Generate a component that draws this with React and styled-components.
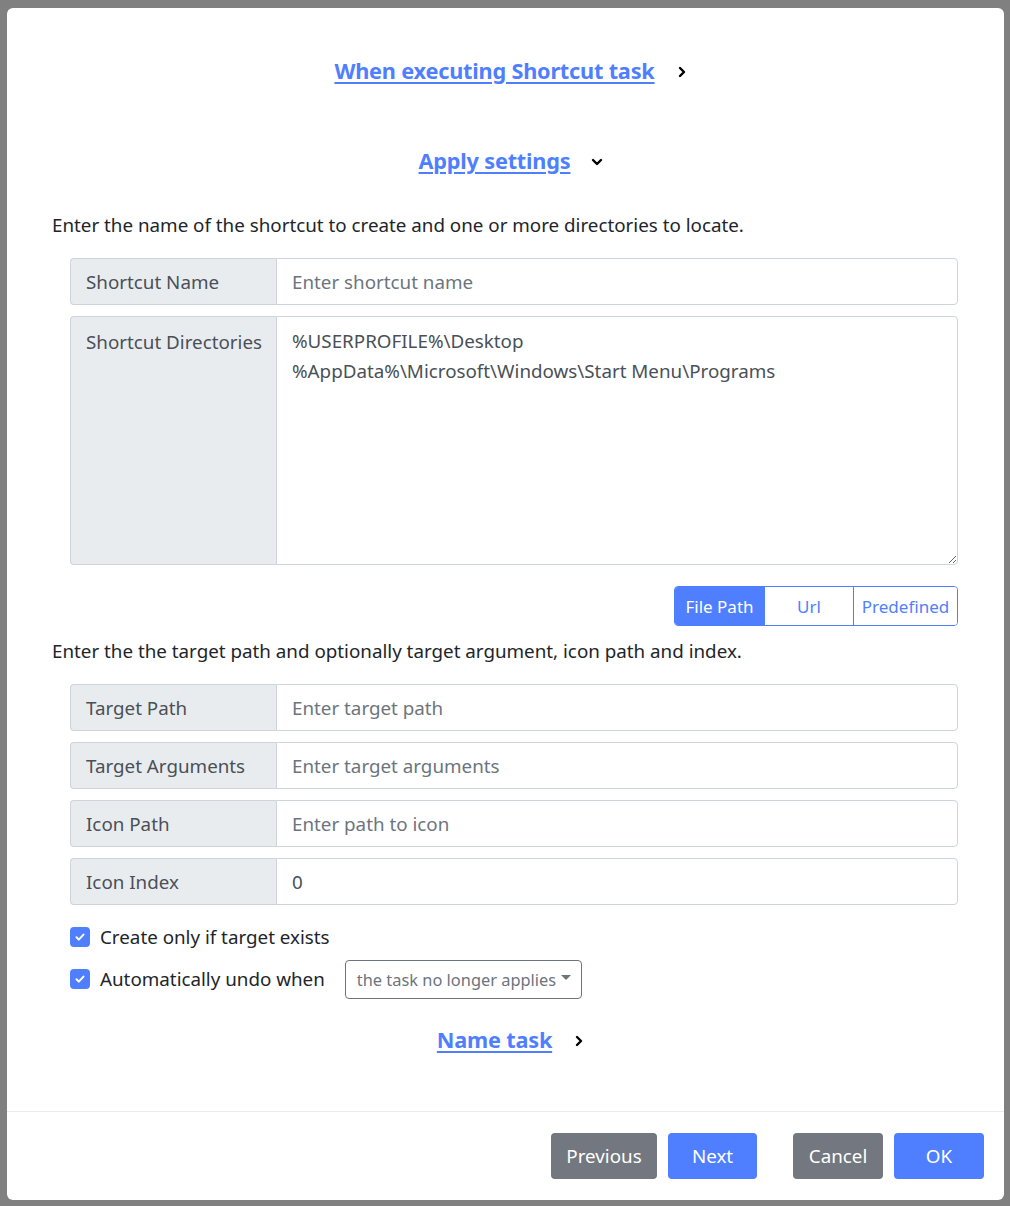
import React from 'react';
import styled, { createGlobalStyle } from 'styled-components';

const GlobalStyle = createGlobalStyle`
  html, body {
    margin: 0;
    padding: 0;
    background: #808080;
  }
  body {
    font-family: 'Noto Sans', 'Open Sans', sans-serif;
    color: #212529;
  }
  * { box-sizing: border-box; }
`;

const Dialog = styled.div`
  margin: 8px 6px 6px 7px;
  width: 997px;
  height: 1192px;
  background: #fff;
  border-radius: 6px;
  display: flex;
  flex-direction: column;
`;

const Body = styled.div`
  flex: 1;
  padding: 44px 46px 0 45px;
`;

const SectionHeader = styled.div`
  display: flex;
  justify-content: center;
  align-items: center;
  gap: 21px;
  height: 36px;
  padding-left: 12px;
  margin-top: ${(p) => p.mt || '0'};
  margin-bottom: ${(p) => p.mb || '54px'};
`;

const HeaderLink = styled.a`
  font-size: 21.7px;
  font-weight: 700;
  color: #4f7fff;
  text-decoration: underline;
  text-underline-offset: 3px;
  text-decoration-thickness: 2px;
  cursor: pointer;
  letter-spacing: -0.2px;
`;

const Chevron = styled.svg`
  width: 12px;
  height: 12px;
  margin-top: 4px;
`;

const Description = styled.p`
  margin: ${(p) => p.m || '0 0 19px'};
  font-size: 18.8px;
  line-height: 27px;
`;

const Groups = styled.div`
  margin-left: 18px;
  display: flex;
  flex-direction: column;
  gap: 11px;
`;

const InputGroup = styled.div`
  display: flex;
  height: ${(p) => p.h || '47px'};
`;

const GroupLabel = styled.div`
  width: 206px;
  flex-shrink: 0;
  background: #e9ecef;
  border: 1px solid #ced4da;
  border-right: none;
  border-radius: 4px 0 0 4px;
  padding: ${(p) => (p.top ? '12px 15px' : '0 15px')};
  display: flex;
  align-items: ${(p) => (p.top ? 'flex-start' : 'center')};
  font-size: 18.8px;
  color: #495057;
  white-space: nowrap;
`;

const TextInput = styled.input`
  flex: 1;
  min-width: 0;
  border: 1px solid #ced4da;
  border-radius: 0 4px 4px 0;
  padding: 0 15px;
  font-family: inherit;
  font-size: 18.8px;
  color: #495057;
  outline: none;
  &::placeholder {
    color: #6c757d;
  }
`;

const TextArea = styled.textarea`
  flex: 1;
  border: 1px solid #ced4da;
  border-radius: 0 4px 4px 0;
  padding: 9px 15px;
  font-family: inherit;
  font-size: 18.8px;
  line-height: 30px;
  color: #495057;
  outline: none;
  resize: vertical;
`;

const ToggleRow = styled.div`
  display: flex;
  justify-content: flex-end;
  margin: 21px 0 12px;
`;

const ToggleGroup = styled.div`
  display: flex;
  border: 1px solid #4f7fff;
  border-radius: 4px;
  overflow: hidden;
  height: 40px;
`;

const ToggleButton = styled.button`
  width: ${(p) => p.w};
  border: none;
  border-left: ${(p) => (p.first ? 'none' : '1px solid #4f7fff')};
  background: ${(p) => (p.active ? '#4f7fff' : '#fff')};
  color: ${(p) => (p.active ? '#fff' : '#4f7fff')};
  font-family: inherit;
  font-size: 17px;
  padding: 0;
  cursor: pointer;
`;

const CheckRow = styled.label`
  display: flex;
  align-items: center;
  gap: 10px;
  font-size: 18.8px;
  margin-left: 18px;
  height: ${(p) => p.h || '30px'};
  margin-top: ${(p) => p.mt || '0'};
`;

const Box = styled.span`
  width: 20px;
  height: 20px;
  border-radius: 4px;
  background: #4f7fff;
  display: inline-flex;
  align-items: center;
  justify-content: center;
  flex-shrink: 0;
`;

const Select = styled.div`
  margin-left: 10px;
  width: 237px;
  height: 39px;
  border: 1px solid #6c757d;
  border-radius: 4px;
  display: flex;
  align-items: center;
  justify-content: space-between;
  padding: 0 10px 0 11px;
  font-size: 16.4px;
  color: #6c757d;
  white-space: nowrap;
`;

const Caret = styled.span`
  width: 0;
  height: 0;
  border-left: 5px solid transparent;
  border-right: 5px solid transparent;
  border-top: 5px solid #6c757d;
  margin-top: -3px;
`;

const Footer = styled.div`
  border-top: 1px solid #e9ecef;
  padding: 21px 20px 21px 0;
  display: flex;
  justify-content: flex-end;
  gap: 11px;
`;

const Button = styled.button`
  height: 46px;
  width: ${(p) => p.w};
  margin-left: ${(p) => p.ml || '0'};
  border: none;
  border-radius: 4px;
  background: ${(p) => (p.secondary ? '#737780' : '#4f7fff')};
  color: #fff;
  font-family: inherit;
  font-size: 18.8px;
  cursor: pointer;
`;

const ChevronRight = () => (
  <Chevron viewBox="0 0 12 12">
    <path d="M4 2l4 4-4 4" fill="none" stroke="#000" strokeWidth="2.4" strokeLinecap="round" strokeLinejoin="round" />
  </Chevron>
);

const ChevronDown = () => (
  <Chevron viewBox="0 0 12 12">
    <path d="M2 4l4 4 4-4" fill="none" stroke="#000" strokeWidth="2.4" strokeLinecap="round" strokeLinejoin="round" />
  </Chevron>
);

const Check = () => (
  <svg width="12" height="12" viewBox="0 0 12 12">
    <path d="M2.5 6.3l2.3 2.3 4.7-5" fill="none" stroke="#fff" strokeWidth="2" strokeLinecap="round" strokeLinejoin="round" />
  </svg>
);

const Field = ({ label, placeholder, value }) => (
  <InputGroup>
    <GroupLabel>{label}</GroupLabel>
    <TextInput placeholder={placeholder} defaultValue={value} />
  </InputGroup>
);

export default function App() {
  return (
    <>
      <GlobalStyle />
      <Dialog>
        <Body>
          <SectionHeader>
            <HeaderLink>When executing Shortcut task</HeaderLink>
            <ChevronRight />
          </SectionHeader>
          <SectionHeader mb="34px">
            <HeaderLink>Apply settings</HeaderLink>
            <ChevronDown />
          </SectionHeader>
          <Description>Enter the name of the shortcut to create and one or more directories to locate.</Description>
          <Groups>
            <Field label="Shortcut Name" placeholder="Enter shortcut name" />
            <InputGroup h="249px">
              <GroupLabel top>Shortcut Directories</GroupLabel>
              <TextArea defaultValue={'%USERPROFILE%\\Desktop\n%AppData%\\Microsoft\\Windows\\Start Menu\\Programs'} />
            </InputGroup>
          </Groups>
          <ToggleRow>
            <ToggleGroup>
              <ToggleButton first active w="89px">File Path</ToggleButton>
              <ToggleButton w="89px">Url</ToggleButton>
              <ToggleButton w="104px">Predefined</ToggleButton>
            </ToggleGroup>
          </ToggleRow>
          <Description m="0 0 19px">Enter the the target path and optionally target argument, icon path and index.</Description>
          <Groups>
            <Field label="Target Path" placeholder="Enter target path" />
            <Field label="Target Arguments" placeholder="Enter target arguments" />
            <Field label="Icon Path" placeholder="Enter path to icon" />
            <Field label="Icon Index" value="0" />
          </Groups>
          <CheckRow mt="17px">
            <Box><Check /></Box>
            Create only if target exists
          </CheckRow>
          <CheckRow h="40px" mt="7px">
            <Box><Check /></Box>
            Automatically undo when
            <Select>
              the task no longer applies
              <Caret />
            </Select>
          </CheckRow>
          <SectionHeader mb="0" mt="22px">
            <HeaderLink>Name task</HeaderLink>
            <ChevronRight />
          </SectionHeader>
        </Body>
        <Footer>
          <Button secondary w="106px">Previous</Button>
          <Button w="89px">Next</Button>
          <Button secondary w="90px" ml="25px">Cancel</Button>
          <Button w="90px">OK</Button>
        </Footer>
      </Dialog>
    </>
  );
}
